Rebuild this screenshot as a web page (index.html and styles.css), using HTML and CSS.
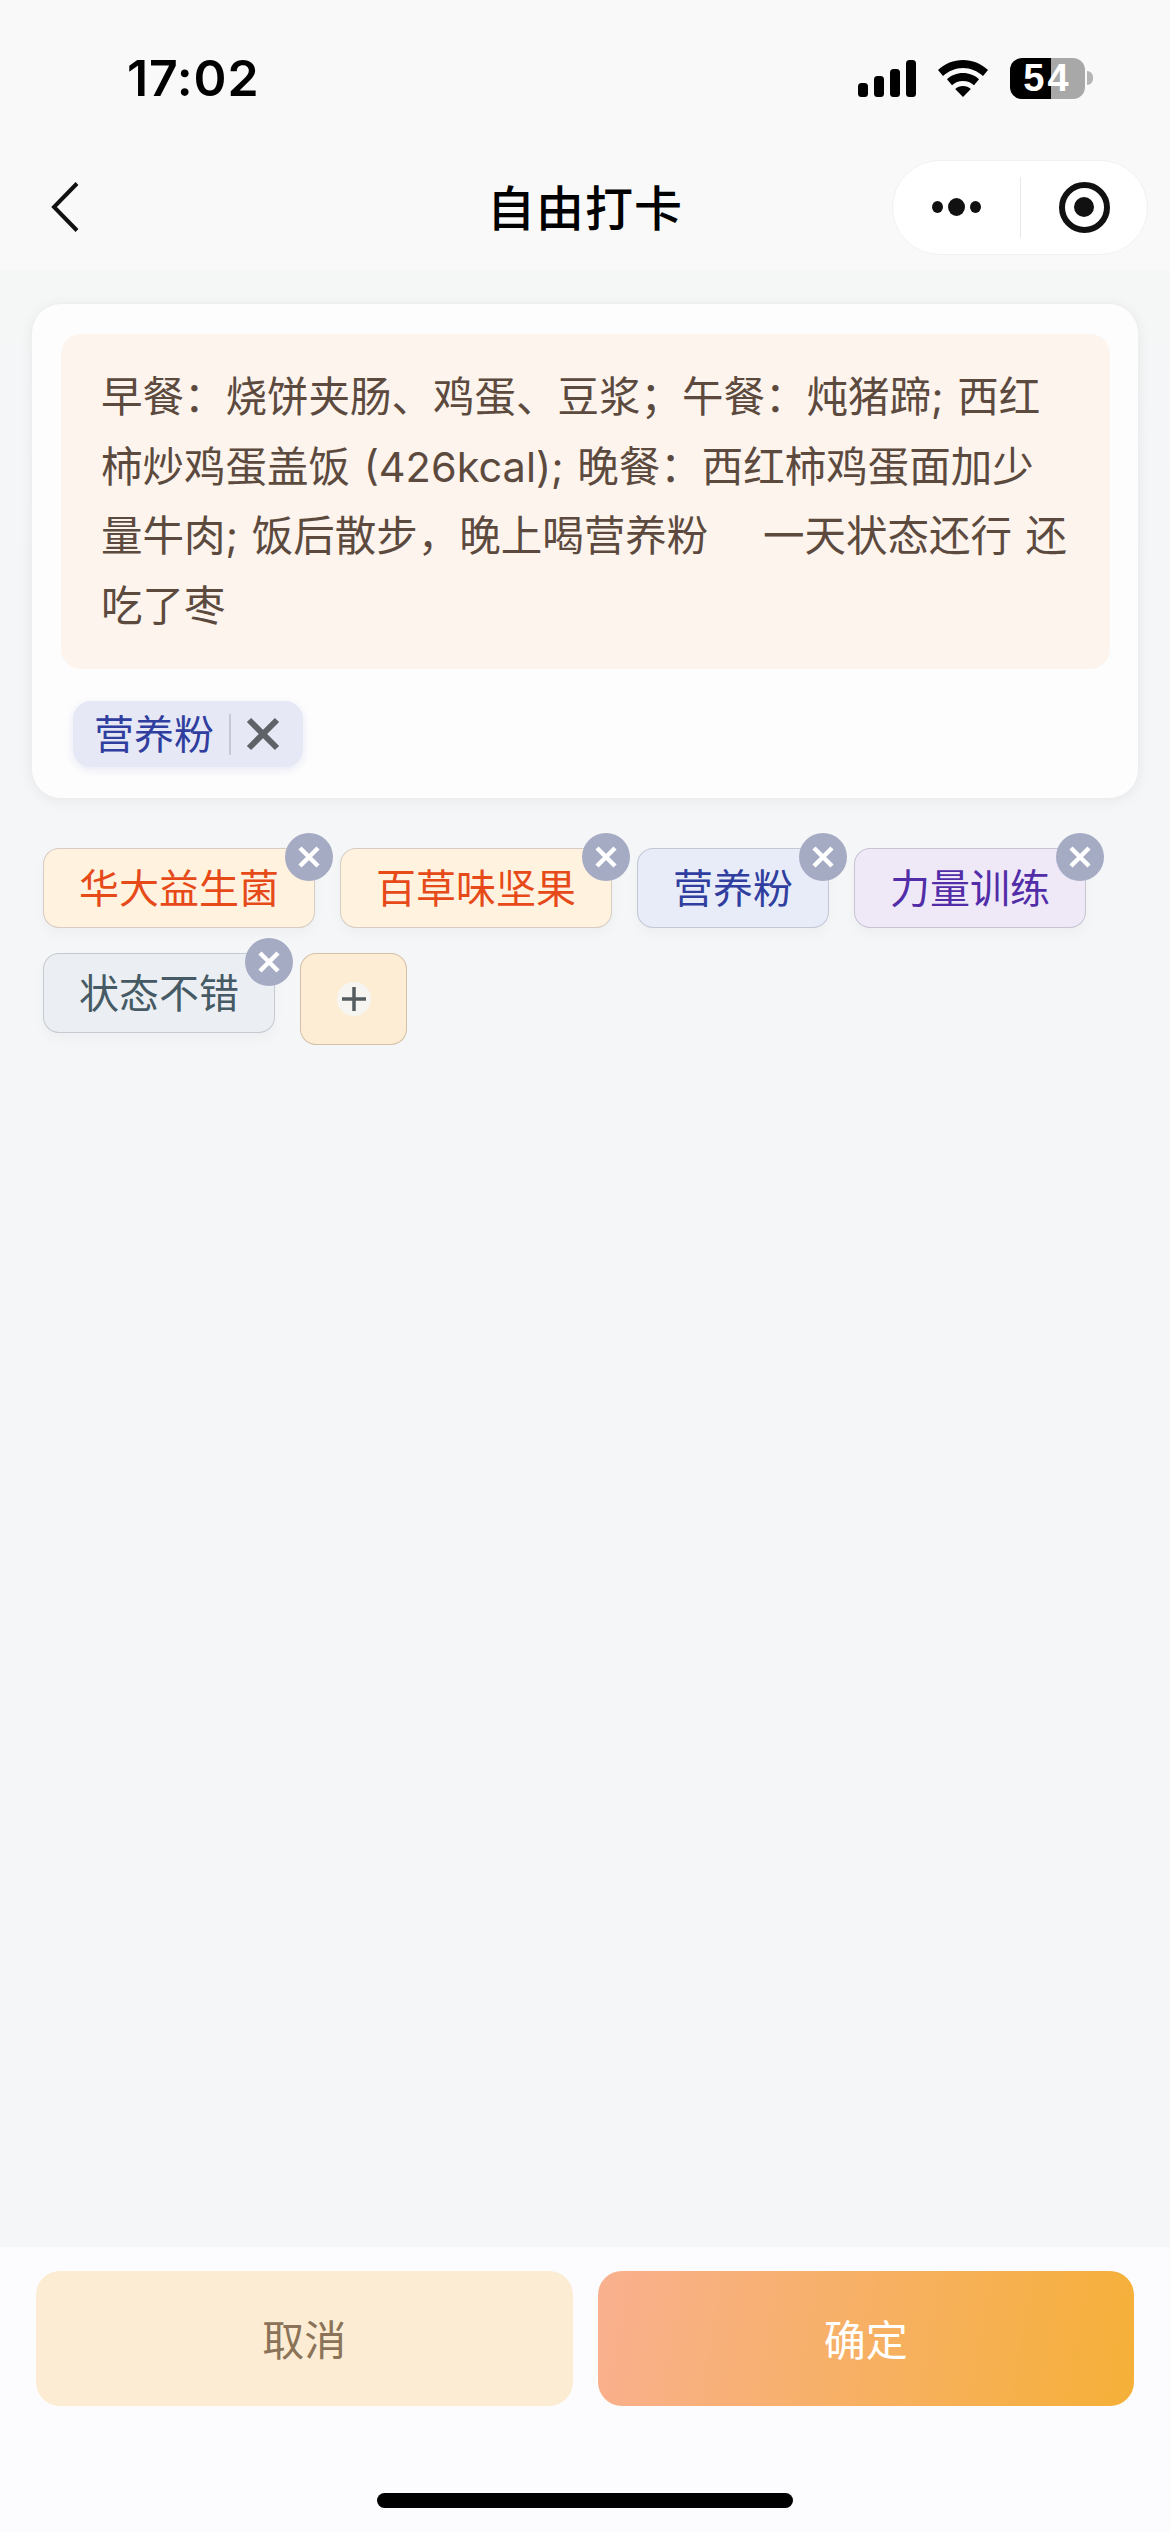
FILE: index.html
```html
<!DOCTYPE html>
<html lang="zh-CN">
  <head>
    <meta charset="UTF-8" />
    <meta name="viewport" content="width=device-width, initial-scale=1.0" />
    <title>自由打卡</title>
    <link rel="stylesheet" href="styles.css">
  </head>
  <body>
    <div class="page">
      <!-- Header -->
      <header class="header">
        <div class="status-bar">
          <span class="time">17:02</span>
          <div class="status-icons">
            <svg class="signal" width="58" height="37" viewBox="0 0 58 37">
              <rect x="0" y="23" width="10" height="14" rx="3.500" />
              <rect x="16" y="16" width="10" height="21" rx="3.500" />
              <rect x="32" y="9" width="10" height="28" rx="3.500" />
              <rect x="48" y="0" width="10" height="37" rx="3.500" />
            </svg>
            <svg class="wifi" width="50" height="37" viewBox="0 0 50 37">
              <path d="M25 0C15.500 0 7 3.600 0 10l5 6c5.500-5 12.500-8 20-8s14.500 3 20 8l5-6C43 3.600 34.500 0 25 0z" />
              <path d="M25 13c-6.200 0-11.800 2.300-16 6.200l5 6c2.900-2.600 6.800-4.200 11-4.200s8.100 1.600 11 4.200l5-6C36.800 15.300 31.200 13 25 13z" />
              <path d="M25 26c-3 0-5.800 1.100-7.800 3L25 37l7.800-8c-2-1.900-4.800-3-7.800-3z" />
            </svg>
            <div class="battery">
              <div class="battery-body">54</div>
              <div class="battery-cap"></div>
            </div>
          </div>
        </div>
        <nav class="nav">
          <svg class="back" width="28" height="50" viewBox="0 0 28 50">
            <path d="M26 1.500 3 25l23 23.500" />
          </svg>
          <h1 class="nav-title">自由打卡</h1>
          <div class="capsule">
            <div class="capsule-more">
              <span class="dot"></span>
              <span class="dot dot-big"></span>
              <span class="dot"></span>
            </div>
            <div class="capsule-line"></div>
            <div class="capsule-close">
              <span class="target"></span>
            </div>
          </div>
        </nav>
      </header>

      <!-- Content -->
      <main class="main">
        <section class="card">
          <div class="note">
            早餐：烧饼夹肠、鸡蛋、豆浆；午餐：炖猪蹄; 西红<br>
            柿炒鸡蛋盖饭 (426kcal); 晚餐：西红柿鸡蛋面加少<br>
            量牛肉; 饭后散步，晚上喝营养粉 &nbsp; &nbsp;一天状态还行 还<br>
            吃了枣
          </div>
          <div class="selected">
            <span class="selected-name">营养粉</span>
            <span class="selected-line"></span>
            <svg class="selected-x" width="36" height="36" viewBox="0 0 36 36">
              <path d="M4 4l28 28M32 4 4 32" />
            </svg>
          </div>
        </section>

        <div class="tags">
          <div class="tag tag-orange">华大益生菌
            <span class="tag-close"><svg width="24" height="24" viewBox="0 0 24 24"><path d="M3 3l18 18M21 3 3 21" /></svg></span>
          </div>
          <div class="tag tag-orange">百草味坚果
            <span class="tag-close"><svg width="24" height="24" viewBox="0 0 24 24"><path d="M3 3l18 18M21 3 3 21" /></svg></span>
          </div>
          <div class="tag tag-blue">营养粉
            <span class="tag-close"><svg width="24" height="24" viewBox="0 0 24 24"><path d="M3 3l18 18M21 3 3 21" /></svg></span>
          </div>
          <div class="tag tag-purple">力量训练
            <span class="tag-close"><svg width="24" height="24" viewBox="0 0 24 24"><path d="M3 3l18 18M21 3 3 21" /></svg></span>
          </div>
          <div class="tag tag-grey">状态不错
            <span class="tag-close"><svg width="24" height="24" viewBox="0 0 24 24"><path d="M3 3l18 18M21 3 3 21" /></svg></span>
          </div>
          <div class="tag-add">
            <span class="tag-add-icon">
              <svg width="24" height="24" viewBox="0 0 24 24"><path d="M0 12h24M12 0v24" /></svg>
            </span>
          </div>
        </div>
      </main>

      <!-- Footer -->
      <footer class="footer">
        <div class="actions">
          <button class="btn btn-cancel">取消</button>
          <button class="btn btn-ok">确定</button>
        </div>
        <div class="home-bar"></div>
      </footer>
    </div>
  </body>
</html>
```

FILE: styles.css
```css
* {
  box-sizing: border-box;
}
body {
  margin: 0;
  background-color: #f5f6f8;
  font-family: "Noto Sans CJK SC", "Noto Sans", sans-serif;
}
.page {
  display: flex;
  flex-direction: column;
  height: 2532px;
  overflow: hidden;
}

/* header */
.header {
  height: 270px;
  background-color: #f9f9f9;
}
.status-bar {
  display: flex;
  align-items: center;
  justify-content: space-between;
  height: 156px;
  padding: 0 77px 0 127px;
}
.time {
  font-family: Inter, "Liberation Sans", sans-serif;
  font-size: 50px;
  font-weight: 600;
  letter-spacing: 0.800px;
  color: #000;
}
.status-icons {
  display: flex;
  align-items: center;
  gap: 22px;
}
.signal,
.wifi {
  fill: #000;
}
.battery {
  display: flex;
  align-items: center;
  gap: 2px;
}
.battery-body {
  width: 75px;
  height: 41px;
  border-radius: 12px;
  background: linear-gradient(90deg, #000 55%, #a8a8a8 55%);
  color: #fff;
  font-family: "Liberation Sans", sans-serif;
  font-size: 38px;
  font-weight: 700;
  line-height: 41px;
  letter-spacing: 3px;
  text-align: center;
}
.battery-cap {
  width: 6px;
  height: 14px;
  border-radius: 0 7px 7px 0;
  background-color: #b5b5b5;
}
.nav {
  display: grid;
  grid-template-columns: 1fr auto 1fr;
  align-items: center;
  height: 102px;
  padding: 0 22px 0 51px;
}
.back {
  fill: none;
  stroke: #111;
  stroke-width: 4;
}
.nav-title {
  margin: 0 29px 4px 0;
  font-size: 48px;
  font-weight: 500;
  color: #000;
  letter-spacing: 1px;
}
.capsule {
  display: flex;
  align-items: center;
  justify-self: end;
  width: 256px;
  height: 95px;
  border: 1px solid #f1f1f1;
  border-radius: 48px;
  background-color: #fff;
}
.capsule-more {
  display: flex;
  align-items: center;
  justify-content: center;
  gap: 5px;
  width: 127px;
}
.dot {
  width: 11px;
  height: 12px;
  border-radius: 50%;
  background-color: #111;
}
.dot-big {
  width: 17px;
  height: 18px;
}
.capsule-line {
  width: 1px;
  height: 61px;
  background-color: #e8e8e8;
}
.capsule-close {
  display: flex;
  align-items: center;
  justify-content: center;
  flex: 1;
}
.target {
  display: flex;
  align-items: center;
  justify-content: center;
  width: 51px;
  height: 51px;
  border: 6px solid #111;
  border-radius: 50%;
}
.target::before {
  content: "";
  width: 20px;
  height: 20px;
  border-radius: 50%;
  background-color: #111;
}

/* content */
.main {
  flex: 1;
  padding: 33px 31px 0;
  background: linear-gradient(180deg, #f5f7f7 0, #f5f6f8 300px);
}
.card {
  width: 1108px;
  padding: 30px 28px 31px 29px;
  border: 1px solid #eeeeef;
  border-radius: 30px;
  background-color: #fdfdfe;
  box-shadow: 0 2px 14px rgba(0, 0, 0, 0.06);
}
.note {
  height: 335px;
  padding: 29px 20px 0 40px;
  border-radius: 20px;
  background-color: #fcf4ed;
  color: #5d4a3e;
  font-family: Inter, "Noto Sans CJK SC", sans-serif;
  font-size: 41.500px;
  line-height: 69.500px;
  word-spacing: 2px;
  white-space: nowrap;
}
.selected {
  display: inline-flex;
  align-items: center;
  height: 66px;
  margin: 32px 0 0 12px;
  padding: 0 22px 0 21px;
  border-radius: 18px;
  background-color: #e6e9f5;
  box-shadow: 0 3px 8px rgba(48, 63, 159, 0.1);
}
.selected-name {
  margin-bottom: 5px;
  color: #303f9f;
  font-size: 40px;
}
.selected-line {
  width: 2px;
  height: 41px;
  margin: 0 14px 0 15px;
  background-color: #c5c8d6;
}
.selected-x {
  fill: none;
  stroke: #5f6368;
  stroke-width: 6;
}
.tags {
  display: flex;
  flex-wrap: wrap;
  align-items: flex-start;
  gap: 25px 25px;
  width: 1090px;
  margin: 49px 0 0 12px;
}
.tag {
  position: relative;
  height: 80px;
  padding: 0 35px;
  border: 1px solid rgba(70, 70, 90, 0.22);
  border-radius: 16px;
  font-size: 40px;
  line-height: 74px;
  white-space: nowrap;
  box-shadow: 0 6px 12px rgba(0, 0, 0, 0.03);
}
.tag-orange {
  background-color: #fff3e0;
  color: #e64a19;
}
.tag-blue {
  background-color: #e8ecf8;
  color: #303f9f;
}
.tag-purple {
  background-color: #efe8f7;
  color: #512da8;
}
.tag-grey {
  background-color: #ebeff3;
  color: #455a64;
}
.tag-close {
  position: absolute;
  top: -16px;
  right: -19px;
  display: flex;
  align-items: center;
  justify-content: center;
  width: 48px;
  height: 48px;
  border-radius: 50%;
  background-color: #a6abc4;
}
.tag-close svg {
  fill: none;
  stroke: #fff;
  stroke-width: 4.500;
}
.tag-add {
  display: flex;
  align-items: center;
  justify-content: center;
  width: 107px;
  height: 92px;
  border: 1px solid rgba(120, 90, 50, 0.3);
  border-radius: 16px;
  background-color: #fdedd5;
}
.tag-add-icon {
  display: flex;
  align-items: center;
  justify-content: center;
  width: 34px;
  height: 34px;
  border-radius: 50%;
  background-color: #f6f5f1;
}
.tag-add-icon svg {
  fill: none;
  stroke: #545c60;
  stroke-width: 3.500;
}

/* footer */
.footer {
  height: 285px;
  padding: 24px 36px 0;
  background-color: #fcfcfe;
}
.actions {
  display: flex;
  gap: 25px;
}
.btn {
  flex: 1;
  height: 135px;
  padding: 0 0 3px;
  border: none;
  border-radius: 24px;
  font-family: inherit;
  font-size: 42px;
}
.btn-cancel {
  background-color: #fcecd3;
  color: #8a7358;
}
.btn-ok {
  background: linear-gradient(100deg, #f9b08f, #f5b038);
  color: #fff;
}
.home-bar {
  width: 416px;
  height: 15px;
  margin: 87px auto 0;
  border-radius: 8px;
  background-color: #000;
}
```
